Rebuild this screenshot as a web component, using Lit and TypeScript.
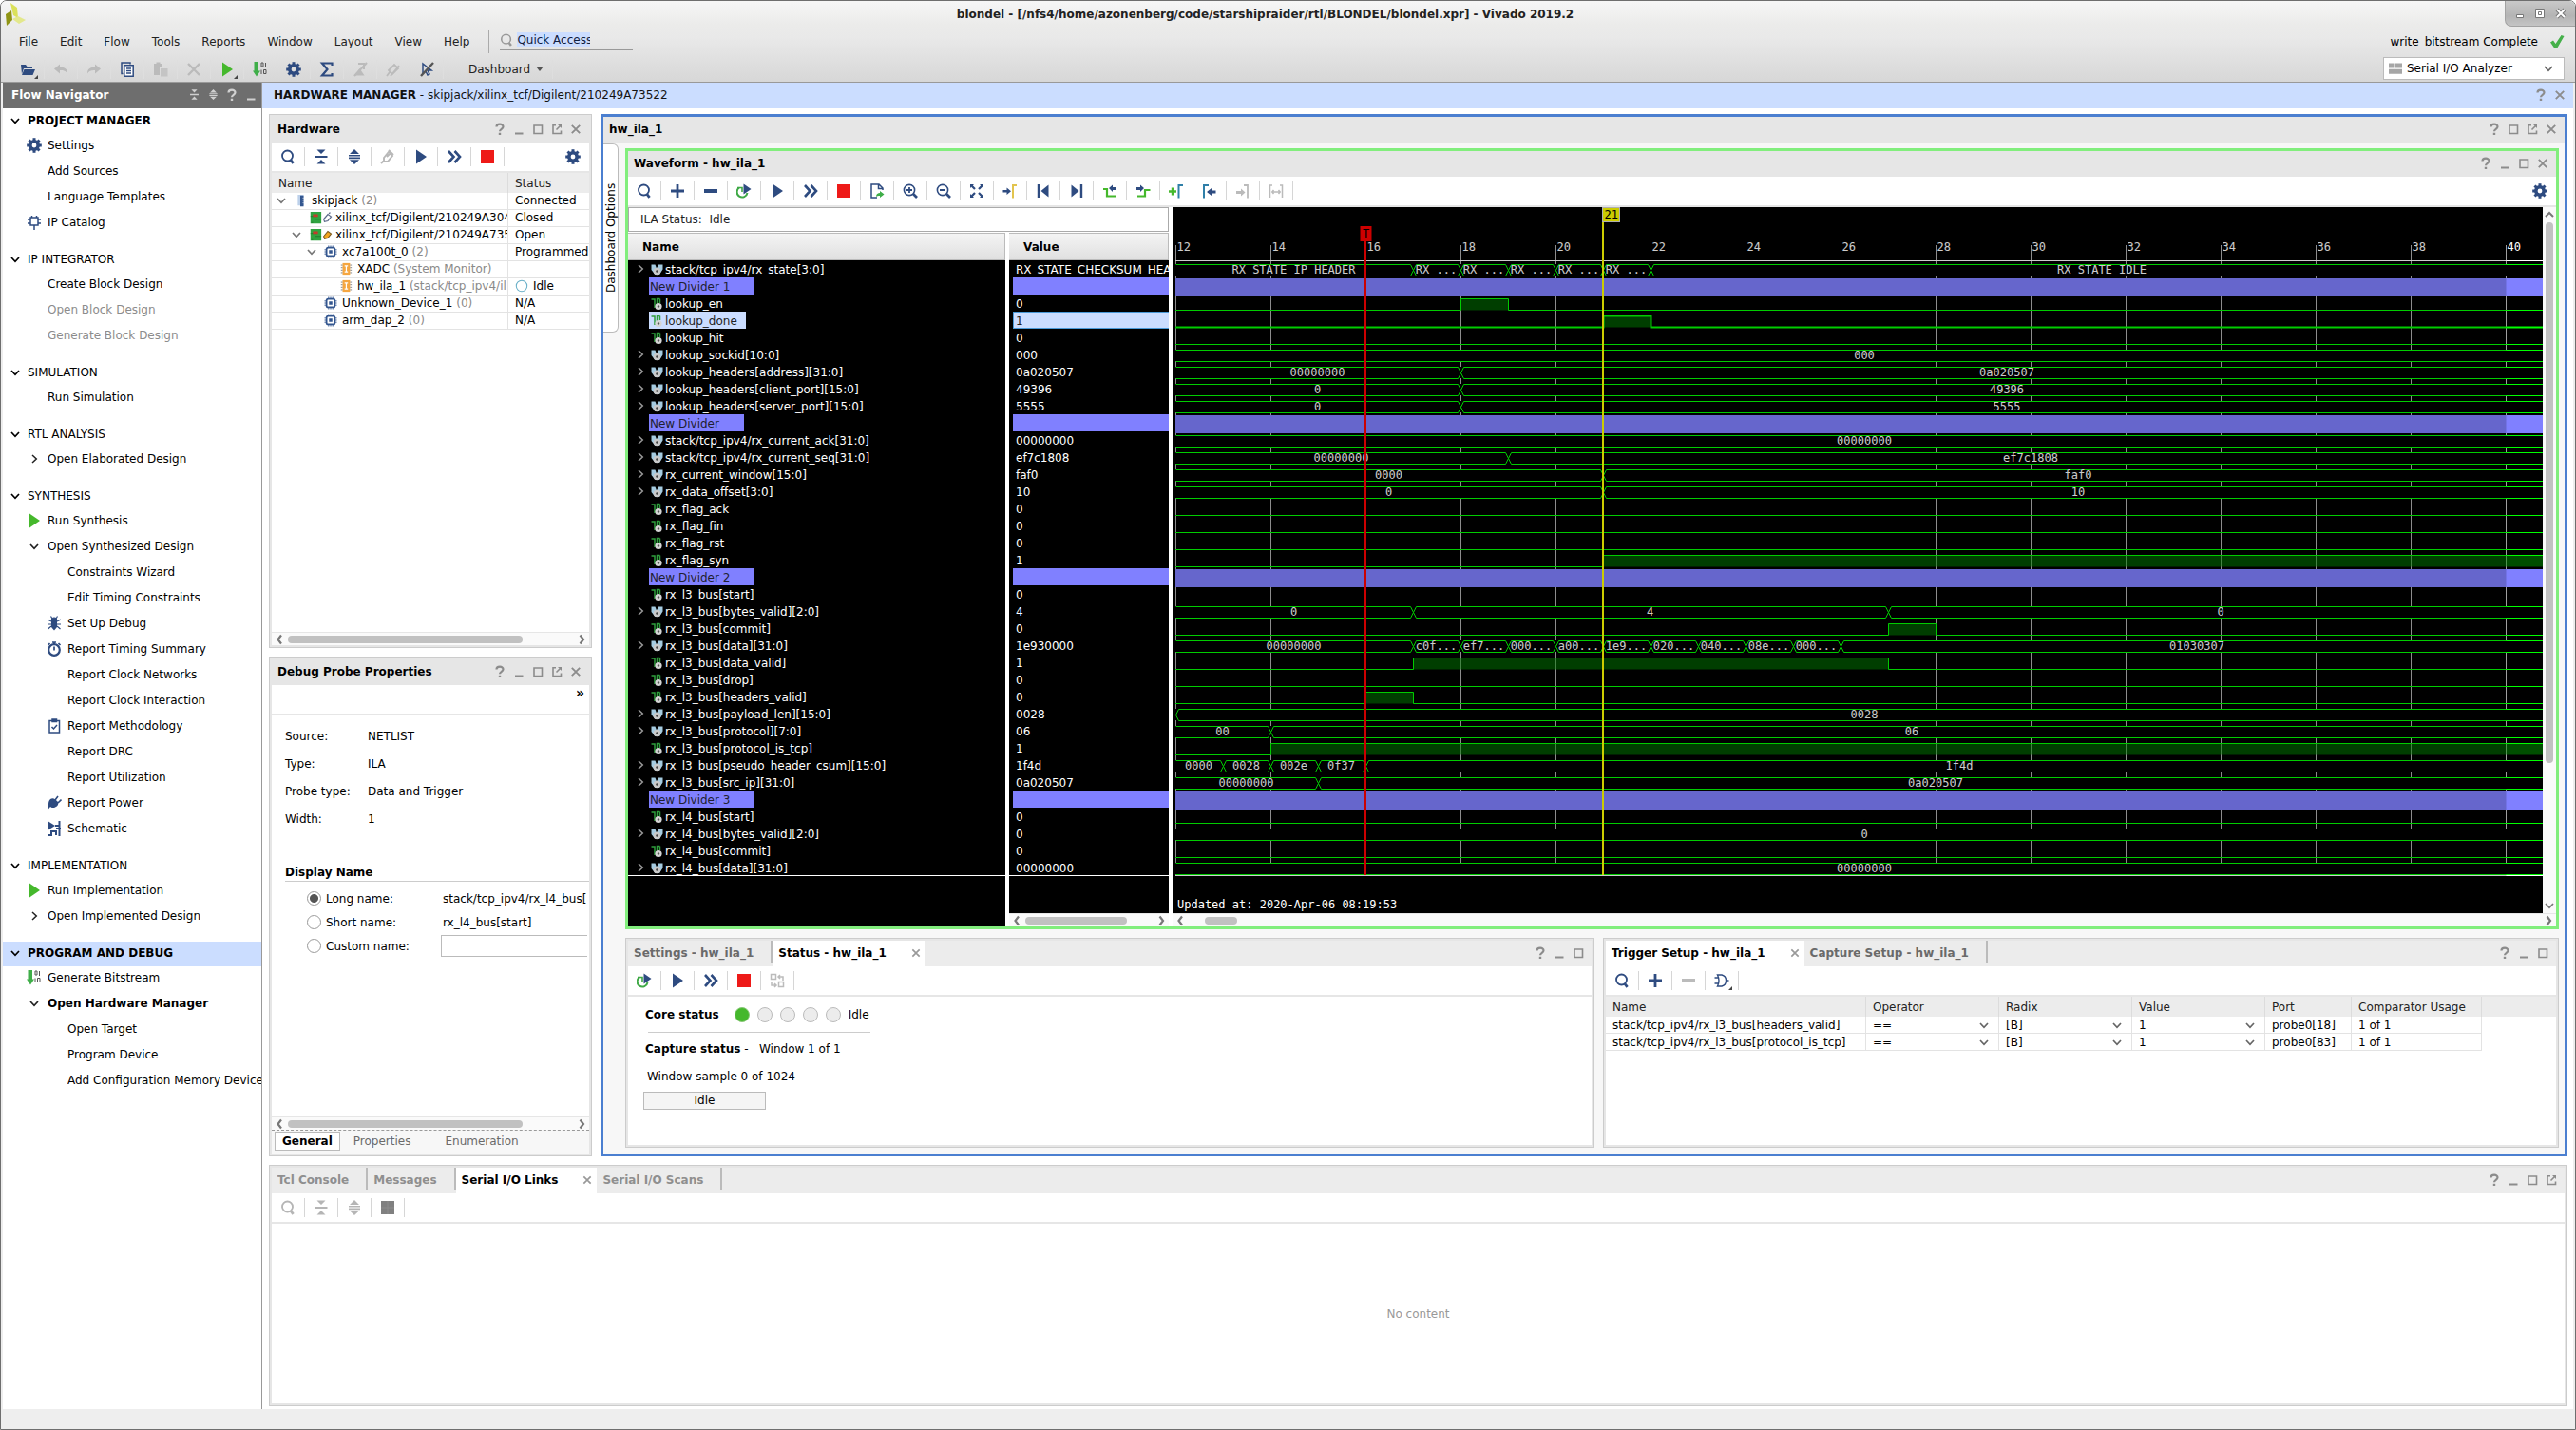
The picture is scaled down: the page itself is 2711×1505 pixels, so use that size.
import { LitElement, html, svg, css, nothing, TemplateResult, SVGTemplateResult } from "lit";
import { customElement, state } from "lit/decorators.js";
import { classMap } from "lit/directives/class-map.js";

/* ---------- icons (16 x 16 grid, drawn in currentColor) ---------- */

const teeth = [0, 45, 90, 135, 180, 225, 270, 315];

const ICONS: Record<string, SVGTemplateResult> = {
  search: svg`<circle cx="7.5" cy="7" r="5.5" fill="none" stroke="currentColor" stroke-width="1.8"/><path d="M11 11.5l2.6 3.3" stroke="currentColor" stroke-width="2.8"/>`,
  collapse: svg`<path d="M3.5 0.5h9L8 5zM1.5 7h13v2h-13zM8 11l4.5 4.5h-9z" fill="currentColor"/>`,
  expand: svg`<path d="M8 0l5 5H3zM2 6h12v1.6H2zM2 8.6h12v1.6H2zM3 11.2h10l-5 4.8z" fill="currentColor"/>`,
  gear: svg`<circle cx="8" cy="8" r="4.2" fill="none" stroke="currentColor" stroke-width="3.6"/>${teeth.map(
    (a) => svg`<rect x="6.5" y="0.2" width="3" height="3.2" fill="currentColor" transform="rotate(${a} 8 8)"/>`
  )}`,
  play: svg`<path d="M3 0.5L14 8 3 15.5z" fill="currentColor"/>`,
  fast: svg`<path d="M2 2l5.5 6L2 14M8.5 2L14 8l-5.500 6" fill="none" stroke="currentColor" stroke-width="2.6"/>`,
  stop: svg`<path d="M1 1h14v14H1z" fill="#ee1a18"/>`,
  plus: svg`<path d="M8 1v14M1 8h14" stroke="currentColor" stroke-width="2.8"/>`,
  minus: svg`<path d="M1 8h14" stroke="currentColor" stroke-width="4"/>`,
  rerun: svg`<path d="M3 4.500a5.500 5.500 0 1 0 8.500 5.500" fill="none" stroke="#3fa946" stroke-width="2"/><path d="M1 4.500h5v4.500" fill="none" stroke="#3fa946" stroke-width="1.600"/><path d="M7.500 0.500L15.500 6l-8 5.500z" fill="currentColor"/>`,
  probe: svg`<path d="M1 15l3-3M4 9l5-6 4 4-5 6-4 0zM9 1l5 5M7 8l3-3" fill="none" stroke="#b9b9b9" stroke-width="1.900"/>`,
  open: svg`<path d="M1 3h5l1.500 2H13v2H4l-2 6z" fill="currentColor"/><path d="M4.500 8H16l-2.500 6H2z" fill="currentColor"/>`,
  undo: svg`<path d="M1 7.500L7 2.500V5.500c5 0 8 2 8 7-2-3-4-3.500-8-3.500v3.500z" fill="#bbb"/>`,
  redo: svg`<path d="M15 7.500L9 2.500V5.500c-5 0-8 2-8 7 2-3 4-3.500 8-3.500v3.500z" fill="#bbb"/>`,
  copy: svg`<path d="M3.500 12.500H2V1h9v1.500" fill="none" stroke="currentColor" stroke-width="1.500"/><path d="M4.800 3.800h9.400v11.400H4.800z" fill="#fff" stroke="currentColor" stroke-width="1.500"/><path d="M7 7h5M7 9.500h5M7 12h5" stroke="currentColor" stroke-width="1.300"/>`,
  paste: svg`<path d="M1 2h9v4H7v8H1zM3.500 0.500h4V3h-4z" fill="#bbb"/><path d="M8 7h7.500v8.500H8z" fill="#c4c4c4"/>`,
  cross: svg`<path d="M2 2l12 12M14 2L2 14" stroke="#bbb" stroke-width="2.400"/>`,
  run: svg`<path d="M3 0.500L14 8 3 15.500z" fill="#45b82c"/>`,
  bits: svg`<path d="M1.500 0h4.500v9.500h2L4 15.500 0 9.500h1.500z" fill="#3fae49"/><path d="M9 1h2v4H9zM13.500 1v5M9 8.500v4.500M11.500 8.500h2.500v4h-2.500z" fill="none" stroke="#555" stroke-width="1"/>`,
  sigma: svg`<path d="M13.500 4V1.500H3L8.500 8 3 14.500h10.500V12" fill="none" stroke="currentColor" stroke-width="2.200"/>`,
  nomark: svg`<path d="M1.500 14.500h11L7.500 7z" fill="#bbb"/><path d="M6 2h6v6M2 15L15 1" fill="none" stroke="#bbb" stroke-width="2"/>`,
  nolink: svg`<path d="M3 9l6-6 4 4-6 6zM5 15L14 4M1 15l3-4" fill="none" stroke="#bbb" stroke-width="1.800"/>`,
  nosel: svg`<path d="M4 2v10l3-2 2 4 2-1-2-4h4z" fill="none" stroke="currentColor" stroke-width="1.500"/><path d="M2 15L15 1" stroke="#555" stroke-width="2.400"/>`,
  ip: svg`<path d="M4 3h8v8H4zM8 11v5M1 5h3M1 9h3M12 5h3M12 9h3M5.500 1v2M10.500 1v2" fill="none" stroke="currentColor" stroke-width="1.500"/>`,
  bug: svg`<path d="M5 5h6v7l-3 3.500L5 12z" fill="currentColor"/><path d="M5.500 4a2.500 2 0 0 1 5 0zM5 6L1 4M11 6l4-2M5 9H1M11 9h4M5 11l-3.500 3M11 11l3.500 3M6 3L4.500 0.500M10 3l1.500-2.500" fill="currentColor" stroke="currentColor" stroke-width="1.200"/>`,
  clock: svg`<circle cx="8" cy="9" r="5.800" fill="none" stroke="currentColor" stroke-width="2.200"/><path d="M6 1h4M8 1v2M8 5.500V9.500M1.500 4l2-2M14.500 4l-2-2" stroke="currentColor" stroke-width="1.700"/>`,
  clip: svg`<path d="M3 2.500h10.500v12.500H3zM6 1h4.500v2.500H6zM5.500 9l2 2 3.500-4" fill="none" stroke="currentColor" stroke-width="1.500"/>`,
  plug: svg`<path d="M4 4c3-2 5 0 8 3 1 3-1 5-4 6-2 0-3 0-4-1l-3 3.500V12l1-2c0-2 0-4 2-6z" fill="currentColor"/><path d="M9 5l3-4M12 8l3.500-3.500" stroke="currentColor" stroke-width="1.600"/>`,
  schem: svg`<path d="M1 15h4v-4h5v4M9 5h5M13.500 0v16M10 8h5" fill="none" stroke="currentColor" stroke-width="2"/><path d="M1 0l8 5-8 5z" fill="currentColor"/>`,
  help: svg`<path d="M4.500 5.500C4.500 1.800 11.500 1.800 11.500 5.300 11.500 7.800 8 7.800 8 10.300" fill="none" stroke="currentColor" stroke-width="2.200"/><path d="M6.800 11.800h2.400v2.200H6.800z" fill="currentColor"/>`,
  min: svg`<path d="M4 12.500h8.500" stroke="currentColor" stroke-width="2"/>`,
  max: svg`<path d="M4 4h8.500v8.500H4z" fill="none" stroke="currentColor" stroke-width="1.600"/>`,
  pop: svg`<path d="M7 3.800H4v8.700h8.500V9.500M7.500 8.500L11.500 4.500" fill="none" stroke="currentColor" stroke-width="1.600"/><path d="M9 3h4v4z" fill="currentColor"/>`,
  close: svg`<path d="M3.800 3.800l8.400 8.400M12.200 3.800l-8.400 8.400" stroke="currentColor" stroke-width="1.900"/>`,
  down: svg`<path d="M4 6l4 4.300L12 6" fill="none" stroke="currentColor" stroke-width="1.700"/>`,
  right: svg`<path d="M6 4l4.300 4L6 12" fill="none" stroke="currentColor" stroke-width="1.500"/>`,
  left: svg`<path d="M10 3.500L6.500 8l3.500 4.500" fill="none" stroke="currentColor" stroke-width="2.200"/>`,
  rightb: svg`<path d="M6.500 3.500L10 8l-3.500 4.500" fill="none" stroke="currentColor" stroke-width="2.200"/>`,
  up: svg`<path d="M4 10l4-4 4 4" fill="none" stroke="currentColor" stroke-width="2"/>`,
  exportf: svg`<path d="M14 7V5l-4-4H2v14h6M9.500 1v4.500H14" fill="none" stroke="currentColor" stroke-width="1.500"/><path d="M7 14c0-3 2-4 4-4V8l4.500 3.500L11 15v-2c-2 0-3 0-4 1z" fill="#3fae49"/>`,
  zin: svg`<circle cx="7" cy="7" r="5.600" fill="none" stroke="currentColor" stroke-width="1.600"/><path d="M11 11l4 4" stroke="currentColor" stroke-width="2.600"/><path d="M7 4v6M4 7h6" stroke="currentColor" stroke-width="1.800"/>`,
  zout: svg`<circle cx="7" cy="7" r="5.600" fill="none" stroke="currentColor" stroke-width="1.600"/><path d="M11 11l4 4" stroke="currentColor" stroke-width="2.600"/><path d="M4 7h6" stroke="currentColor" stroke-width="1.800"/>`,
  fit: svg`<path d="M1 5V1h4L3.800 2.200 6.800 5.200 5.200 6.800 2.200 3.800zM15 5V1h-4l1.200 1.200-3 3 1.600 1.600 3-3zM1 11v4h4l-1.200-1.200 3-3-1.600-1.600-3 3zM15 11v4h-4l1.200-1.200-3-3 1.600-1.600 3 3z" fill="currentColor"/>`,
  gocur: svg`<path d="M0.500 7h4V4.500L9 8.300 4.500 12V9.500h-4z" fill="currentColor"/><path d="M11 15.500V2h4" fill="none" stroke="#e2c44e" stroke-width="2"/>`,
  first: svg`<path d="M3 1v14" stroke="currentColor" stroke-width="2.400"/><path d="M13.500 1.500v13L5.500 8z" fill="currentColor"/>`,
  last: svg`<path d="M13 1v14" stroke="currentColor" stroke-width="2.400"/><path d="M2.500 1.500v13l8-6.500z" fill="currentColor"/>`,
  prevt: svg`<path d="M1 6h4v7.500h10" fill="none" stroke="#45b82c" stroke-width="2.200"/><path d="M7 5l4-3.500V4h4v3h-4v2z" fill="currentColor"/>`,
  nextt: svg`<path d="M2 13.500h8V7h5.500" fill="none" stroke="#45b82c" stroke-width="2.200"/><path d="M9 5L5 1.500V4H1v3h4v2z" fill="currentColor"/>`,
  addm: svg`<path d="M4 4.500v8M0 8.500h8" stroke="#45b82c" stroke-width="2.400"/><path d="M10.500 15.500V2H15" fill="none" stroke="#2f7fa8" stroke-width="2"/>`,
  prevm: svg`<path d="M2 15.500V2h5" fill="none" stroke="#2f7fa8" stroke-width="2"/><path d="M5 9l5-4v2.500h4.500v3H10V13z" fill="currentColor"/>`,
  nextm: svg`<path d="M9 2h4v13.500" fill="none" stroke="#bbb" stroke-width="1.800"/><path d="M10.500 9.500L6 5.500V8H1v3h5v2.500z" fill="#bbb"/>`,
  swap: svg`<path d="M1.500 15V2H4M14.500 15V2H12M4 9h8M5.500 7L3.800 9l1.700 2M10.500 7l1.700 2-1.700 2" fill="none" stroke="#bbb" stroke-width="1.500"/>`,
  layout: svg`<path d="M1.500 1.500h5v5h-5zM9.500 9.500h5v5h-5z" fill="none" stroke="#bbb" stroke-width="1.500"/><path d="M9 4h5v4M2 9v4h5M11 2L9 4l2 2M5 11l2 2-2 2" fill="none" stroke="#bbb" stroke-width="1.500"/>`,
  gate: svg`<path d="M3.500 2H8c6 1.500 6 10.500 0 12H3.500c2-4 2-8 0-12zM0.500 5h4M0.500 11h4M12.500 8h3" fill="none" stroke="currentColor" stroke-width="1.400"/>`,
  block: svg`<path d="M1 1h14v14H1z" fill="#808080"/><path d="M8 1v14M1 8h14" stroke="#8c8c8c" stroke-width="1"/>`,
  check: svg`<path d="M1 8.500l3-2L6.500 10 12.500 1 15.500 2 8 15H5.500z" fill="#45b04a"/>`,
  dash: svg`<path d="M1 2.500h5.500v5H1zM7.500 2.500H15v5H7.500zM1 8.700h14v5H1z" fill="#a6a6a6"/>`,
  server: svg`<path d="M5 1h7v13H5z" fill="#bcd0ea"/><path d="M8 2h4v13H8z" fill="#33568f"/><path d="M11 5h1M11 8h1M11 11h1" stroke="#fff"/>`,
  board: svg`<path d="M2 1h13v14H2z" fill="#2fa33f"/><path d="M2 6.500h8M7 10h8M3 14h2" stroke="#1c7a2b"/><path d="M5 4h6v3H5z" fill="#c53a2c"/>`,
  pencil: svg`<path d="M3 10l5-6 4 3-4 5-4 1zM9 3l2-1" fill="none" stroke="#5c6a8a" stroke-width="1.400"/>`,
  pencilon: svg`<path d="M3 10l5-6 4 3-4 5-4 1z" fill="#f3a51e" stroke="#7b5a20" stroke-width="1.300"/>`,
  cpu: svg`<rect x="3" y="3" width="10" height="10" rx="2" fill="none" stroke="currentColor" stroke-width="2"/><path d="M6 6h4v4H6z" fill="currentColor"/><path d="M5.500 0.500v2M8 0.500v2M10.500 0.500v2M5.500 13.500v2M8 13.500v2M10.500 13.500v2M0.500 5.500h2M0.500 8h2M0.500 10.500h2M13.500 5.500h2M13.500 8h2M13.500 10.500h2" stroke="currentColor"/>`,
  core: svg`<path d="M4 1h9v14H4z" fill="#f5a640"/><path d="M2 3.500h2M2 6.500h2M2 9.500h2M2 12.500h2M13 3.500h2M13 6.500h2M13 9.500h2M13 12.500h2" fill="none" stroke="#777" stroke-width="1"/><path d="M6.500 4.500h4M8.500 4.500v7M6.500 11.500h4" stroke="#fff" stroke-width="1.400"/>`,
  idle: svg`<circle cx="8" cy="8" r="6.500" fill="#fff" stroke="#6ab0c8" stroke-width="1.200"/>`,
  bus: svg`<path d="M2.500 2.500h4l1.500 4 2-4h4.500v5L11 13H6.500l-4-5z" fill="#a5cbe0"/><circle cx="8.500" cy="9.500" r="3.800" fill="#c9c9c9"/><circle cx="8.500" cy="9.500" r="1.300" fill="#444"/>`,
  bit: svg`<path d="M2.500 3H6v9M11.500 2.500H8.500V8M11.500 2.500V7" fill="none" stroke="#2f9e3d" stroke-width="1.500"/><circle cx="10" cy="10.500" r="3.600" fill="#d5d5d5"/><circle cx="10" cy="10.500" r="1.200" fill="#555"/>`,
};

const icon = (name: string, size = 16) =>
  html`<svg class="ico" width=${size} height=${size} viewBox="0 0 16 16" aria-hidden="true">${ICONS[name]}</svg>`;

/* ---------- data ---------- */

interface NavItem { label: string; icon?: string; level?: 2; dim?: boolean; bold?: boolean; }
interface NavGroup { title: string; bold?: boolean; active?: boolean; items: NavItem[]; }

const NAV: NavGroup[] = [
  { title: "PROJECT MANAGER", bold: true, items: [
    { label: "Settings", icon: "gear" }, { label: "Add Sources" }, { label: "Language Templates" }, { label: "IP Catalog", icon: "ip" } ] },
  { title: "IP INTEGRATOR", items: [
    { label: "Create Block Design" }, { label: "Open Block Design", dim: true }, { label: "Generate Block Design", dim: true } ] },
  { title: "SIMULATION", items: [{ label: "Run Simulation" }] },
  { title: "RTL ANALYSIS", items: [{ label: "Open Elaborated Design", icon: "right" }] },
  { title: "SYNTHESIS", items: [
    { label: "Run Synthesis", icon: "run" }, { label: "Open Synthesized Design", icon: "down" },
    { label: "Constraints Wizard", level: 2 }, { label: "Edit Timing Constraints", level: 2 },
    { label: "Set Up Debug", level: 2, icon: "bug" }, { label: "Report Timing Summary", level: 2, icon: "clock" },
    { label: "Report Clock Networks", level: 2 }, { label: "Report Clock Interaction", level: 2 },
    { label: "Report Methodology", level: 2, icon: "clip" }, { label: "Report DRC", level: 2 },
    { label: "Report Utilization", level: 2 }, { label: "Report Power", level: 2, icon: "plug" },
    { label: "Schematic", level: 2, icon: "schem" } ] },
  { title: "IMPLEMENTATION", items: [
    { label: "Run Implementation", icon: "run" }, { label: "Open Implemented Design", icon: "right" } ] },
  { title: "PROGRAM AND DEBUG", bold: true, active: true, items: [
    { label: "Generate Bitstream", icon: "bits" }, { label: "Open Hardware Manager", icon: "down", bold: true },
    { label: "Open Target", level: 2 }, { label: "Program Device", level: 2 }, { label: "Add Configuration Memory Device", level: 2 } ] },
];

const MENUS: [string, string, string][] = [
  ["", "F", "ile"], ["", "E", "dit"], ["F", "l", "ow"], ["", "T", "ools"], ["Rep", "o", "rts"],
  ["", "W", "indow"], ["La", "y", "out"], ["", "V", "iew"], ["", "H", "elp"],
];

interface HwRow { depth: number; open?: boolean; icons: string[]; name: string; note?: string; status: string; idle?: boolean; }

const HARDWARE: HwRow[] = [
  { depth: 0, open: true, icons: ["server"], name: "skipjack", note: "(2)", status: "Connected" },
  { depth: 1, icons: ["board", "pencil"], name: "xilinx_tcf/Digilent/210249A304", status: "Closed" },
  { depth: 1, open: true, icons: ["board", "pencilon"], name: "xilinx_tcf/Digilent/210249A735", status: "Open" },
  { depth: 2, open: true, icons: ["cpu"], name: "xc7a100t_0", note: "(2)", status: "Programmed" },
  { depth: 3, icons: ["core"], name: "XADC", note: "(System Monitor)", status: "" },
  { depth: 3, icons: ["core"], name: "hw_ila_1", note: "(stack/tcp_ipv4/il", status: "Idle", idle: true },
  { depth: 2, icons: ["cpu"], name: "Unknown_Device_1", note: "(0)", status: "N/A" },
  { depth: 2, icons: ["cpu"], name: "arm_dap_2", note: "(0)", status: "N/A" },
];

/* bus: [start time, label] for each stretch; bit: [from, to] of each high stretch */
interface Signal {
  name: string; value?: string; divider?: boolean; selected?: boolean;
  bus?: [number, string][]; edge?: boolean; bit?: [number, number][];
}
const T0 = 12;
const END = 41.02;
const MAX = 60;

const SIGNALS: Signal[] = [
  { name: "stack/tcp_ipv4/rx_state[3:0]", value: "RX_STATE_CHECKSUM_HEA",
    bus: [[12, "RX_STATE_IP_HEADER"], [17, "RX_..."], [18, "RX_..."], [19, "RX_..."], [20, "RX_..."], [21, "RX_..."], [22, "RX_STATE_IDLE"]] },
  { name: "New Divider 1", divider: true },
  { name: "lookup_en", value: "0", bit: [[18, 19]] },
  { name: "lookup_done", value: "1", bit: [[21, 22]], selected: true },
  { name: "lookup_hit", value: "0", bit: [] },
  { name: "lookup_sockid[10:0]", value: "000", bus: [[12, "000"]] },
  { name: "lookup_headers[address][31:0]", value: "0a020507", bus: [[12, "00000000"], [18, "0a020507"]] },
  { name: "lookup_headers[client_port][15:0]", value: "49396", bus: [[12, "0"], [18, "49396"]] },
  { name: "lookup_headers[server_port][15:0]", value: "5555", bus: [[12, "0"], [18, "5555"]] },
  { name: "New Divider", divider: true },
  { name: "stack/tcp_ipv4/rx_current_ack[31:0]", value: "00000000", bus: [[12, "00000000"]] },
  { name: "stack/tcp_ipv4/rx_current_seq[31:0]", value: "ef7c1808", bus: [[12, "00000000"], [19, "ef7c1808"]] },
  { name: "rx_current_window[15:0]", value: "faf0", bus: [[12, "0000"], [21, "faf0"]] },
  { name: "rx_data_offset[3:0]", value: "10", bus: [[12, "0"], [21, "10"]] },
  { name: "rx_flag_ack", value: "0", bit: [] },
  { name: "rx_flag_fin", value: "0", bit: [] },
  { name: "rx_flag_rst", value: "0", bit: [] },
  { name: "rx_flag_syn", value: "1", bit: [[21, MAX]] },
  { name: "New Divider 2", divider: true },
  { name: "rx_l3_bus[start]", value: "0", bit: [] },
  { name: "rx_l3_bus[bytes_valid][2:0]", value: "4", bus: [[12, "0"], [17, "4"], [27, "0"]] },
  { name: "rx_l3_bus[commit]", value: "0", bit: [[27, 28]] },
  { name: "rx_l3_bus[data][31:0]", value: "1e930000",
    bus: [[12, "00000000"], [17, "c0f..."], [18, "ef7..."], [19, "000..."], [20, "a00..."], [21, "1e9..."], [22, "020..."], [23, "040..."], [24, "08e..."], [25, "000..."], [26, "01030307"]] },
  { name: "rx_l3_bus[data_valid]", value: "1", bit: [[17, 27]] },
  { name: "rx_l3_bus[drop]", value: "0", bit: [] },
  { name: "rx_l3_bus[headers_valid]", value: "0", bit: [[16, 17]] },
  { name: "rx_l3_bus[payload_len][15:0]", value: "0028", bus: [[12, "0028"]], edge: true },
  { name: "rx_l3_bus[protocol][7:0]", value: "06", bus: [[12, "00"], [14, "06"]] },
  { name: "rx_l3_bus[protocol_is_tcp]", value: "1", bit: [[14, MAX]] },
  { name: "rx_l3_bus[pseudo_header_csum][15:0]", value: "1f4d", bus: [[12, "0000"], [13, "0028"], [14, "002e"], [15, "0f37"], [16, "1f4d"]] },
  { name: "rx_l3_bus[src_ip][31:0]", value: "0a020507", bus: [[12, "00000000"], [15, "0a020507"]] },
  { name: "New Divider 3", divider: true },
  { name: "rx_l4_bus[start]", value: "0", bit: [] },
  { name: "rx_l4_bus[bytes_valid][2:0]", value: "0", bus: [[12, "0"]] },
  { name: "rx_l4_bus[commit]", value: "0", bit: [] },
  { name: "rx_l4_bus[data][31:0]", value: "00000000", bus: [[12, "00000000"]] },
];

const TRIGGERS = [
  { name: "stack/tcp_ipv4/rx_l3_bus[headers_valid]", port: "probe0[18]" },
  { name: "stack/tcp_ipv4/rx_l3_bus[protocol_is_tcp]", port: "probe0[83]" },
];

/* ---------- waveform geometry ---------- */

const X0 = 3;
const STEP = 50;
const ROW0 = 56;
const ROW = 18;
const at = (t: number) => X0 + (t - T0) * STEP + 0.5;
const BOTTOM = ROW0 + SIGNALS.length * ROW - 1;

function busPath(s: Signal, y: number): string {
  const a = y + 4.5;
  const b = y + 16.5;
  const m = y + 10.5;
  let d = "";
  s.bus!.forEach(([t], i) => {
    const x = at(t);
    const next = s.bus![i + 1];
    const e = at(next ? next[0] : MAX);
    const open = i > 0 || s.edge;
    const l = open ? x + 3 : x;
    const r = next ? e - 3 : e;
    d += `M${l} ${a}H${r}M${l} ${b}H${r}`;
    if (open) d += `M${l} ${a}L${x} ${m}L${l} ${b}`;
    if (next) d += `M${r} ${a}L${e} ${m}L${r} ${b}`;
  });
  return d;
}

function signalShape(s: Signal, i: number): SVGTemplateResult {
  const y = ROW0 + i * ROW;
  const far = at(MAX);
  if (s.divider) return svg`<rect class="w-div" x=${X0} y=${y + 1} width=${far} height="19"/>`;
  if (s.bus) {
    return svg`<rect x=${X0} y=${y + 4} width=${far} height="12"/>
      <path class="w-line" d=${busPath(s, y)}/>
      ${s.bus.map(([, label], k) => {
        const next = s.bus![k + 1];
        const mid = (at(s.bus![k][0]) + at(next ? next[0] : END)) / 2 - 1;
        return svg`<text class="w-text" text-anchor="middle" x=${mid} y=${y + 14}>${label}</text>`;
      })}`;
  }
  const hi = y + 4.5;
  const lo = y + 16.5;
  let d = `M${X0} ${lo}`;
  for (const [f, t] of s.bit!) d += `H${at(f)}V${hi}H${at(t)}V${lo}`;
  d += `H${far}`;
  return svg`${s.bit!.map(([f, t]) => svg`<rect class="w-fill" x=${at(f)} y=${hi} width=${(t - f) * STEP} height="12"/>`)}
    <path class=${s.selected ? "w-line thick" : "w-line"} d=${s.bit!.length && !s.selected ? highs(s, hi, lo, far) : d}/>`;
}

/* the baseline is left out under each high stretch, where the fill has its own darker edge */
function highs(s: Signal, hi: number, lo: number, far: number): string {
  let d = `M${X0} ${lo}`;
  for (const [f, t] of s.bit!) d += `H${at(f)}V${hi}H${at(t)}V${lo}`;
  return d + `H${far}`;
}

function waveform(): SVGTemplateResult {
  const ticks = Array.from({ length: 20 }, (_, i) => 12 + i * 2);
  return svg`
    ${ticks.map((t) => svg`<path class="w-grid" d="M${at(t)} 40V${BOTTOM}"/>
      <text class="w-text" x=${at(t) + 1} y="46">${t}</text>`)}
    <path class="w-axis" d="M${X0} 56.5H${at(MAX)}M${X0} ${BOTTOM + 0.5}H${at(MAX)}"/>
    ${SIGNALS.map(signalShape)}
    <path class="w-trig" d="M${at(16) - 0.5} 20V${BOTTOM}"/>
    <rect class="w-trig-tag" x=${at(16) - 6} y="20" width="12" height="16"/>
    <text class="w-tag" text-anchor="middle" x=${at(16)} y="32">T</text>
    <path class="w-cur" d="M${at(21) - 0.5} 0V${BOTTOM}"/>
    <rect class="w-cur-tag" x=${at(21) - 1} y="0.5" width="18" height="15"/>
    <text class="w-tag" x=${at(21) + 1} y="12">21</text>
    <rect class="w-past" width=${at(40)} height=${BOTTOM + 1}/>
    <text class="w-text" x="5" y="738">Updated at: 2020-Apr-06 08:19:53</text>`;
}

/* ---------- component ---------- */

@customElement("app-root")
export class AppRoot extends LitElement {
  @state() private nameMode = "long";

  static styles = css`
    :host { display: block; font: 12px/16px "DejaVu Sans", sans-serif; color: #000; }
    * { box-sizing: border-box; }
    button, input, select { font: inherit; color: inherit; margin: 0; }
    button { border: 0; background: none; padding: 0; white-space: nowrap; }
    a { color: inherit; text-decoration: none; }
    h1, h2, h3, p, ul { margin: 0; padding: 0; font: inherit; }
    ul { list-style: none; }
    .ico { display: block; flex: none; }
    .grow { flex: 1; min-width: 0; }
    .b { font-weight: bold; }

    .window { height: 100vh; display: flex; flex-direction: column; overflow: hidden; background: #fff;
      border: 1px solid #6e6e6e; border-radius: 7px 7px 0 0; }
    .top { height: 86px; flex: none; background: linear-gradient(#f6f6f6, #ebebea 30%, #e9e9e9 45%, #d7d7d7); border-bottom: 1px solid #999;
      display: grid; grid-template-columns: 1fr auto; grid-template-rows: 27px 1fr; padding-left: 2px; }
    .title { grid-area: 1 / 1 / 2 / 3; display: flex; align-items: center; padding-left: 2px; }
    .title h1 { flex: 1; text-align: center; font-weight: bold; color: #222; padding-right: 74px; }
    .wm { grid-area: 1 / 2; width: 74px; margin-left: auto; display: flex; justify-content: space-around; align-items: center; padding: 0 4px;
      background: linear-gradient(#c9c9c9, #b4b4b4 60%, #c4c4c4); border: solid #a2a2a2; border-width: 0 0 1px 1px; border-radius: 0 0 0 7px; }
    .wm button { height: 16px; }
    .left-tools { display: flex; flex-direction: column; }
    .menus { display: flex; align-items: center; height: 32px; padding-left: 17px; color: #222; }
    .menus nav { display: flex; gap: 23px; }
    .menus u { text-underline-offset: 2px; }
    .quick { display: flex; align-items: center; gap: 4px; margin: 0 0 4px 11px; width: 140px; height: 22px;
      border-bottom: 1px solid #999; color: #999; }
    .quick input { border: 0; padding: 0; width: 77px; height: 15px; background: #cbddff; color: #102040; outline: 0; }
    .quick input::placeholder { color: #102040; opacity: 1; }
    .vsep { width: 1px; height: 24px; background: #aaa; margin-left: 20px; }
    .tb { display: flex; align-items: center; color: #2e4b80; }
    .tb button { width: 35px; height: 20px; display: flex; align-items: center; justify-content: center; border-right: 1px solid #d6d6d6; }
    .main-tb { padding-left: 9px; height: 25px; }
    .main-tb button { position: relative; border-color: #dedede; }
    .corner::after { content: ""; position: absolute; right: 6px; bottom: 0; border: solid transparent; border-width: 0 0 4px 4px; border-bottom-color: #444; }
    .main-tb .dash-menu { width: auto; gap: 6px; padding: 0 9px 0 26px; color: #222; }
    .tri { border: 4px solid transparent; border-top: 5px solid #555; border-bottom: 0; }
    .right-tools { display: flex; flex-direction: column; padding: 8px 11px 0 0; gap: 8px; align-items: flex-end; }
    .done { display: flex; align-items: center; gap: 12px; }
    .combo { display: grid; grid-template-columns: 24px 1fr 24px; align-items: center; width: 191px; height: 24px; background: #fff; border: 1px solid #bbb; padding-left: 4px; color: #666; }
    .combo > * { grid-row: 1; }
    .combo select { grid-column: 1 / 4; padding: 0 0 0 20px; }
    .combo .ico:first-of-type { grid-column: 1; }
    .combo .ico:last-of-type { grid-column: 3; }
    select { appearance: none; border: 0; background: none; outline: 0; color: #000; width: 100%; height: 100%; }

    .body { flex: 1; min-height: 0; display: grid; grid-template-columns: 273px minmax(0, 1fr); border: solid #eee; border-width: 0 2px 0 2px; }
    .flow { border-right: 1px solid #999; overflow: hidden; white-space: nowrap; }
    .flow-head { height: 27px; background: #6e6e6e; color: #fff; display: flex; align-items: center; padding: 0 1px 2px 9px; }
    .flow-head button { width: 20px; display: flex; justify-content: center; color: #d0d0d0; }
    .group { padding-bottom: 13px; }
    .flow > .group:nth-of-type(1) { margin-top: 1px; }
    .group h2 { height: 26px; display: flex; align-items: center; gap: 5px; padding: 0 0 2px 5px; margin-bottom: -1px; }
    .group h2.active { background: #cbddff; }
    .group a { height: 27px; display: grid; grid-template-columns: 16px auto; gap: 6px; align-items: center; justify-content: start; padding: 0 0 2px 25px; color: #000; }
    .group a.l2 { padding-left: 46px; }
    .group a .ico { color: #2e4b80; grid-column: 1; }
    .group a .arrow .ico { color: #222; }
    .group a > span:last-child { grid-column: 2; }
    .group a.dim { color: #8c8c8c; }

    .work { display: flex; flex-direction: column; min-width: 0; min-height: 0; }
    .work-head { height: 27px; flex: none; background: #cbddff; display: flex; align-items: center; padding: 0 4px 2px 12px; color: #111; }
    .wbtns { display: flex; color: #8c8c8c; }
    .wbtns button { width: 20px; display: flex; justify-content: center; }
    .area { flex: 1; min-height: 0; display: grid; padding: 6px 6px 3px 7px; gap: 9px;
      grid-template-columns: 340px minmax(0, 1fr); grid-template-rows: 562fr 526fr 254fr; }
    .panel { border: 1px solid #ccc; background: #fff; box-shadow: inset 0 0 0 2px #e6e6e6; padding: 2px; display: flex; flex-direction: column; min-width: 0; min-height: 0; overflow: hidden; }
    .phead { height: 27px; flex: none; background: #e6e6e6; display: flex; align-items: center; padding: 0 4px 2px 6px; }
    .phead h2 { flex: 1; font-weight: bold; }
    .ptb { height: 32px; flex: none; border-bottom: 2px solid #e6e6e6; }
    .ptb .plain { border: 0; }
    .ptb .rel { position: relative; }

    table { border-collapse: separate; border-spacing: 0; table-layout: fixed; white-space: nowrap; }
    th { background: #ececec; font-weight: normal; text-align: left; height: 21px; padding: 0 7px; color: #222; border-right: 1px solid #dcdcdc; }
    td { height: 18px; padding: 0 7px; border: solid #e3e3e3; border-width: 0 1px 1px 0; overflow: hidden; }
    .hw { width: 100%; }
    .hw td:last-child, .hw th:last-child { border-right: 0; }
    .hw td { padding-right: 0; }
    .tree { display: flex; align-items: center; gap: 5px; height: 17px; padding-bottom: 1px; overflow: hidden; }
    .tree i { font-style: normal; color: #8a8a8a; }
    .tree .ico { color: #33568f; }
    .tree .tw { width: 16px; flex: none; }
    .tree .tw .ico { color: #777; }
    .tree .pen { margin: 0 -4px 0 -6px; }
    .d0 { margin-left: -5px; } .d1 { margin-left: 11px; } .d2 { margin-left: 27px; } .d3 { margin-left: 43px; }
    .hscroll { height: 14px; flex: none; display: flex; align-items: center; background: #fafafa; border-top: 1px solid #e6e6e6; color: #777; }
    .hscroll .track { flex: 1; height: 8px; margin: 0 3px 0 1px; }
    .thumb { display: block; height: 8px; border-radius: 4px; background: #c1c1c1; width: 83%; }
    .spacer { flex: 1; min-height: 0; }

    .more { height: 32px; flex: none; border-bottom: 2px solid #e6e6e6; display: flex; justify-content: flex-end; align-items: flex-start; padding: 0 5px; font-size: 14px; font-weight: bold; }
    .props { padding: 8px 0 0 14px; white-space: nowrap; overflow: hidden; flex: 1; }
    .props dl { display: grid; grid-template-columns: 87px 1fr; margin: 0; line-height: 29px; }
    .props dt, .props dd { margin: 0; }
    .props h3 { font-weight: bold; margin-top: 33px; height: 18px; border-bottom: 1px solid #ccc; }
    .radios { padding: 5px 0 0 23px; display: grid; grid-template-columns: 143px 1fr; align-items: center; grid-auto-rows: 25px; }
    .radios label.r { display: flex; align-items: center; gap: 5px; }
    input[type="radio"] { appearance: none; width: 15px; height: 15px; border: 1px solid #999; border-radius: 50%; background: #fff; }
    input[type="radio"]:checked { background: radial-gradient(circle, #555 0 4px, #fff 5px); }
    .radios .txt { width: 100%; height: 23px; border: 1px solid #bbb; border-right: 0; margin-left: -2px; outline: 0; }
    .btabs { height: 25px; flex: none; background: #f7f7f7; border-top: 1px dashed #999; display: flex; align-items: center; padding: 0 0 2px 3px; }
    .btabs button { height: 20px; padding: 0 14px; margin-right: 8px; color: #6a6a6a; }
    .btabs button.on { background: #fff; border: 1px solid #bbb; padding: 0 7px; margin-right: 0; color: #000; font-weight: bold; }

    .ila { grid-row: 1 / 3; grid-column: 2; border: 3px solid #4b7fd0; background: #f7f7f7; display: flex; flex-direction: column; min-width: 0; min-height: 0; }
    .ila-body { flex: 1; min-height: 0; display: grid; grid-template-columns: 16px minmax(0, 1fr); column-gap: 7px; padding: 0 6px 6px 0; }
    .dopt { height: 199px; margin-top: 1px; background: #fff; writing-mode: vertical-rl; transform: rotate(180deg); border: 1px solid #bbb; border-right: 0; border-radius: 6px 0 0 6px; }
    .ila-main { padding-top: 6px; display: grid; grid-template-rows: 822fr 221fr; grid-template-columns: 1020fr 1006fr; gap: 9px; min-width: 0; min-height: 0; }
    .wavep { grid-column: 1 / 3; border: 3px solid #82ee7d; background: #fff; display: flex; flex-direction: column; min-width: 0; min-height: 0; overflow: hidden; }
    .wave-body { flex: 1; min-height: 0; display: grid; grid-template-columns: 569px minmax(0, 1fr); gap: 4px; }
    .sigs { display: grid; grid-template-columns: 397px minmax(0, 1fr); grid-template-rows: 27px 29px minmax(0, 1fr); column-gap: 4px; min-height: 0; white-space: nowrap; }
    .ila-status { grid-column: 1 / 3; border: 1px solid #aaa; margin-bottom: 1px; padding: 4px 12px; color: #222; }
    .colh { border: 1px solid #bbb; border-left: 0; background: linear-gradient(#f4f4f4, #e0e0e0); font-weight: bold; padding: 6px 15px; }
    .names, .vals { background: #000; color: #fff; overflow: hidden; display: flex; flex-direction: column; }
    .rows { border-bottom: 1px solid #fff; height: 648px; flex: none; overflow: hidden; }
    .sig { height: 18px; display: flex; align-items: center; padding-left: 3px; }
    .sig .tw { width: 19px; flex: none; color: #999; padding-left: 2px; }
    .sig .lab { display: flex; align-items: center; gap: 1px; height: 18px; padding: 2px 9px 0 0; }
    .sig .lab.div { background: #8080ff; color: #202030; padding: 2px 26px 0 1px; }
    .sig .lab.sel, .val.sel { background: #cbddff; color: #222; }
    .val { height: 18px; line-height: 16px; margin-left: 4px; padding: 2px 0 0 3px; }
    .val.div { background: #8080ff; }
    .val.sel { border: 1px solid #4a9ad8; border-right: 0; padding: 1px 0 0 2px; }
    .vals .hscroll .thumb { width: 81%; }
    .plot { display: grid; grid-template-columns: minmax(0, 1fr) 14px; grid-template-rows: minmax(0, 1fr) 14px; min-height: 0; }
    .plot > svg { background: #000; width: 100%; height: 100%; display: block; font: 12px "DejaVu Sans Mono", monospace; }
    .plot .hscroll { grid-column: 1 / 3; }
    .plot .hscroll .thumb { width: 34px; margin-left: 17px; }
    .vscroll { background: #fafafa; color: #777; display: flex; flex-direction: column; align-items: center; }
    .vscroll .track { flex: 1; width: 8px; }
    .vscroll .thumb { width: 8px; height: 80%; }
    .w-grid { stroke: #b0b0b0; stroke-width: 1; }
    .w-axis { stroke: #fff; stroke-width: 1; fill: none; }
    .w-line { stroke: #00ff00; stroke-width: 1; fill: none; }
    .w-line.thick { stroke-width: 2; }
    .w-fill { fill: #009c00; fill-opacity: 0.5; }
    .w-div { fill: #8080ff; }
    .w-text { fill: #fff; }
    .w-trig { stroke: #ff0000; stroke-width: 2; } .w-trig-tag { fill: #ff0000; }
    .w-cur { stroke: #ffff00; stroke-width: 2; } .w-cur-tag { fill: #ffff00; stroke: #ddd; }
    .w-tag { fill: #000; }
    .w-past { fill: #000; fill-opacity: 0.2; }

    .tabs { height: 27px; flex: none; background: #ececec; display: flex; align-items: stretch; padding-right: 4px; }
    .tabs .wbtns { margin-left: auto; align-items: center; padding-bottom: 2px; }
    .tab { display: flex; align-items: center; font-weight: bold; color: #6a6a6a; padding: 0 20px 2px 6px; position: relative; }
    .tab.off { color: #8f8f8f; }
    .tab.on { background: #fff; color: #000; gap: 24px; padding-right: 3px; }
    .tab.on .ico { color: #999; }
    .tab:not(.on)::after { content: ""; position: absolute; right: 0; top: 0; height: 23px; width: 2px; background: #bbb; }
    .status { padding: 10px 14px 0 18px; }
    .line { display: flex; align-items: center; height: 18px; }
    .dots { display: flex; gap: 8px; margin: 0 8px 0 16px; }
    .dots i { width: 16px; height: 16px; border-radius: 50%; background: #ececec; border: 1px solid #bbb; }
    .dots i.on { background: #45b82c; border-color: #8bc97a; }
    .rule { width: 234px; height: 1px; background: #ccc; margin: 9px 0 8px 3px; }
    .status .samp { margin: 12px 0 8px 2px; }
    .bar { width: 129px; height: 19px; border: 1px solid #bbb; background: #f5f5f5; text-align: center; line-height: 17px; margin-left: -2px; }
    .cell { display: grid; grid-template-columns: 1fr 16px; align-items: center; height: 17px; color: #666; }
    .cell > * { grid-row: 1; }
    .cell select { grid-column: 1 / 3; padding: 0; }
    .cell .ico { grid-column: 2; pointer-events: none; }
    .trig { background: #fff; }
    .trig-wrap { background: linear-gradient(#ececec 21px, #fff 21px); flex: 1; }
    .wide { grid-column: 1 / 3; }
    .nocontent { flex: 1; display: flex; align-items: center; justify-content: center; color: #999; }
    .bot-tb { color: #b5b5b5; }
    .foot { height: 21px; flex: none; background: #eee; }
  `;

  private tools(names: string[], cls = "ptb") {
    const split = names.includes("|");
    return html`<div class="tb ${cls}">${names.map((n, i) =>
      n === "|" ? html`<span class="grow"></span>`
      : html`<button class=${classMap({ plain: split && i === names.length - 1, corner: n === "gate", rel: n === "gate" })} aria-label=${n}>${n === "minus-off" ? html`<svg class="ico" width="16" height="16" viewBox="0 0 16 16"><path d="M1 8h14" stroke="#bbb" stroke-width="4"/></svg>` : icon(n)}</button>`)}</div>`;
  }

  private wbtns(names: string[]) {
    return html`<div class="wbtns">${names.map((n) => html`<button aria-label=${n}>${icon(n)}</button>`)}</div>`;
  }

  private head(title: string, btns: string[]) {
    return html`<div class="phead"><h2>${title}</h2>${this.wbtns(btns)}</div>`;
  }

  private hscroll() {
    return html`<div class="hscroll">${icon("left")}<span class="track"><span class="thumb"></span></span>${icon("rightb")}</div>`;
  }

  private tab(label: string, kind: "on" | "mid" | "off") {
    return html`<button class="tab ${kind}" role="tab">${label}${kind === "on" ? icon("close", 14) : nothing}</button>`;
  }

  private picker(label: string, value: string) {
    return html`<div class="cell"><select aria-label=${label}><option>${value}</option></select>${icon("down")}</div>`;
  }

  private renderTop() {
    const wm = [
      svg`<path d="M4.500 9.500h7v3h-7z" fill="#fff" stroke="#777"/>`,
      svg`<path d="M3.500 3.500h9v9h-9zM6.500 6.500h3v3h-3z" fill="#fff" stroke="#777"/>`,
      svg`<path d="M4 4l8 8M12 4l-8 8" stroke="#777" stroke-width="4"/><path d="M4 4l8 8M12 4l-8 8" stroke="#fff" stroke-width="2"/>`,
    ];
    const bar = ["open", "undo", "redo", "copy", "paste", "cross", "run", "bits", "gear", "sigma", "nomark", "nolink", "nosel"];
    return html`<header class="top">
      <div class="title">
        <svg class="ico" width="22" height="26" viewBox="0 0 22 26"><path d="M6 1l7 5 1 11-5-3z" fill="#dbe15a"/><path d="M1 13l6-4 1 10-6 6z" fill="#8f9414"/><path d="M8 18l6-3 8 4-7 4z" fill="#e3e88c"/></svg>
        <h1>blondel - [/nfs4/home/azonenberg/code/starshipraider/rtl/BLONDEL/blondel.xpr] - Vivado 2019.2</h1>
      </div>
      <div class="wm">${wm.map((p) => html`<button aria-label="window"><svg class="ico" width="16" height="16" viewBox="0 0 16 16">${p}</svg></button>`)}</div>
      <div class="left-tools">
        <div class="menus">
          <nav>${MENUS.map(([a, u, c]) => html`<button>${a}<u>${u}</u>${c}</button>`)}</nav>
          <span class="vsep"></span>
          <label class="quick">${icon("search", 14)}<input aria-label="Quick Access" placeholder="Quick Access"></label>
        </div>
        <div class="tb main-tb">
          ${bar.map((n) => html`<button aria-label=${n} class=${classMap({ corner: n === "open" || n === "run" })}>${icon(n)}</button>`)}
          <button class="dash-menu">Dashboard <span class="tri"></span></button>
        </div>
      </div>
      <div class="right-tools">
        <div class="done"><span>write_bitstream Complete</span>${icon("check")}</div>
        <div class="combo">${icon("dash")}<select aria-label="Layout"><option>Serial I/O Analyzer</option></select>${icon("down")}</div>
      </div>
    </header>`;
  }

  private renderFlow() {
    const btns: [string, number][] = [["collapse", 11], ["expand", 11], ["help", 16], ["min", 16]];
    return html`<aside class="flow">
      <div class="flow-head"><h2 class="b grow">Flow Navigator</h2>
        ${btns.map(([n, s]) => html`<button aria-label=${n}>${icon(n, s)}</button>`)}
      </div>
      ${NAV.map((g) => html`<section class="group">
        <h2 class=${classMap({ b: !!g.bold, active: !!g.active })}>${icon("down")}<span>${g.title}</span></h2>
        <ul>${g.items.map((it) => html`<li><a href="#" class=${classMap({ l2: it.level === 2, dim: !!it.dim, b: !!it.bold })}>
          ${it.icon ? html`<span class=${it.icon === "down" || it.icon === "right" ? "arrow" : ""}>${icon(it.icon)}</span>` : nothing}<span>${it.label}</span></a></li>`)}</ul>
      </section>`)}
    </aside>`;
  }

  private renderHardware() {
    return html`<section class="panel">
      ${this.head("Hardware", ["help", "min", "max", "pop", "close"])}
      ${this.tools(["search", "collapse", "expand", "probe", "play", "fast", "stop", "|", "gear"])}
      <table class="hw">
        <colgroup><col><col width="85"></colgroup>
        <thead><tr><th>Name</th><th>Status</th></tr></thead>
        <tbody>${HARDWARE.map((r) => html`<tr>
          <td><div class="tree d${r.depth}"><span class="tw">${r.open ? icon("down") : nothing}</span>
            ${r.icons.map((n) => n.startsWith("pencil") ? html`<span class="pen">${icon(n, 14)}</span>` : icon(n, 14))}
            <span>${r.name} ${r.note ? html`<i>${r.note}</i>` : nothing}</span></div></td>
          <td><div class="tree">${r.idle ? icon("idle", 14) : nothing}${r.status}</div></td>
        </tr>`)}</tbody>
      </table>
      <div class="spacer"></div>
      ${this.hscroll()}
    </section>`;
  }

  private renderProps() {
    const modes: [string, string, string][] = [
      ["long", "Long name:", "stack/tcp_ipv4/rx_l4_bus["],
      ["short", "Short name:", "rx_l4_bus[start]"],
      ["custom", "Custom name:", ""],
    ];
    return html`<section class="panel">
      ${this.head("Debug Probe Properties", ["help", "min", "max", "pop", "close"])}
      <div class="more"><button aria-label="More">»</button></div>
      <div class="props">
        <dl><dt>Source:</dt><dd>NETLIST</dd><dt>Type:</dt><dd>ILA</dd><dt>Probe type:</dt><dd>Data and Trigger</dd><dt>Width:</dt><dd>1</dd></dl>
        <h3>Display Name</h3>
        <div class="radios">${modes.map(([id, label, val]) => html`
          <label class="r"><input type="radio" name="mode" .checked=${this.nameMode === id} @change=${() => (this.nameMode = id)}>${label}</label>
          ${val ? html`<span>${val}</span>` : html`<input class="txt" aria-label="Custom name">`}`)}</div>
      </div>
      ${this.hscroll()}
      <div class="btabs"><button class="on">General</button><button>Properties</button><button>Enumeration</button></div>
    </section>`;
  }

  private renderWave() {
    const bar = ["search", "plus", "minus", "rerun", "play", "fast", "stop", "exportf", "zin", "zout", "fit", "gocur", "first", "last", "prevt", "nextt", "addm", "prevm", "nextm", "swap", "|", "gear"];
    return html`<section class="wavep">
      ${this.head("Waveform - hw_ila_1", ["help", "min", "max", "close"])}
      ${this.tools(bar)}
      <div class="wave-body">
        <div class="sigs">
          <div class="ila-status">ILA Status:&nbsp; Idle</div>
          <div class="colh">Name</div><div class="colh">Value</div>
          <div class="names"><div class="rows">${SIGNALS.map((s) => html`<div class="sig">
            <span class="tw">${s.bus ? icon("right") : nothing}</span>
            <span class=${classMap({ lab: true, div: !!s.divider, sel: !!s.selected })}>${s.divider ? nothing : icon(s.bus ? "bus" : "bit")}${s.name}</span>
          </div>`)}</div></div>
          <div class="vals"><div class="rows">${SIGNALS.map((s) => html`<div class=${classMap({ val: true, div: !!s.divider, sel: !!s.selected })}>${s.value ?? nothing}</div>`)}</div>
            <div class="spacer"></div>${this.hscroll()}</div>
        </div>
        <div class="plot">
          <svg>${waveform()}</svg>
          <div class="vscroll">${icon("up")}<span class="track"><span class="thumb"></span></span>${icon("down")}</div>
          ${this.hscroll()}
        </div>
      </div>
    </section>`;
  }

  private renderStatus() {
    return html`<section class="panel">
      <div class="tabs">${this.tab("Settings - hw_ila_1", "mid")}${this.tab("Status - hw_ila_1", "on")}${this.wbtns(["help", "min", "max"])}</div>
      ${this.tools(["rerun", "play", "fast", "stop", "layout"])}
      <div class="status">
        <div class="line"><span class="b">Core status</span><span class="dots"><i class="on"></i><i></i><i></i><i></i><i></i></span>Idle</div>
        <div class="rule"></div>
        <div class="line"><span><span class="b">Capture status</span> -&nbsp;&nbsp; Window 1 of 1</span></div>
        <p class="samp">Window sample 0 of 1024</p>
        <div class="bar" role="progressbar" aria-label="Capture progress">Idle</div>
      </div>
    </section>`;
  }

  private renderTrigger() {
    return html`<section class="panel">
      <div class="tabs">${this.tab("Trigger Setup - hw_ila_1", "on")}${this.tab("Capture Setup - hw_ila_1", "mid")}${this.wbtns(["help", "min", "max"])}</div>
      ${this.tools(["search", "plus", "minus-off", "gate"])}
      <div class="trig-wrap"><table class="trig">
        <colgroup><col width="274"><col width="140"><col width="140"><col width="140"><col width="91"><col width="137"></colgroup>
        <thead><tr>${["Name", "Operator", "Radix", "Value", "Port", "Comparator Usage"].map((h) => html`<th>${h}</th>`)}</tr></thead>
        <tbody>${TRIGGERS.map((t) => html`<tr><td>${t.name}</td><td>${this.picker("Operator", "==")}</td><td>${this.picker("Radix", "[B]")}</td>
          <td>${this.picker("Value", "1")}</td><td>${t.port}</td><td>1 of 1</td></tr>`)}</tbody>
      </table></div>
    </section>`;
  }

  render(): TemplateResult {
    return html`<div class="window">
      ${this.renderTop()}
      <div class="body">
        ${this.renderFlow()}
        <main class="work">
          <div class="work-head"><span class="grow"><span class="b">HARDWARE MANAGER</span> - skipjack/xilinx_tcf/Digilent/210249A73522</span>${this.wbtns(["help", "close"])}</div>
          <div class="area">
            ${this.renderHardware()}
            <section class="ila">
              ${this.head("hw_ila_1", ["help", "max", "pop", "close"])}
              <div class="ila-body">
                <button class="dopt">Dashboard Options</button>
                <div class="ila-main">${this.renderWave()}${this.renderStatus()}${this.renderTrigger()}</div>
              </div>
            </section>
            ${this.renderProps()}
            <section class="panel wide">
              <div class="tabs">${this.tab("Tcl Console", "off")}${this.tab("Messages", "off")}${this.tab("Serial I/O Links", "on")}${this.tab("Serial I/O Scans", "off")}${this.wbtns(["help", "min", "max", "pop"])}</div>
              ${this.tools(["search", "collapse", "expand", "block"], "ptb bot-tb")}
              <div class="nocontent">No content</div>
            </section>
          </div>
        </main>
      </div>
      <footer class="foot"></footer>
    </div>`;
  }
}
